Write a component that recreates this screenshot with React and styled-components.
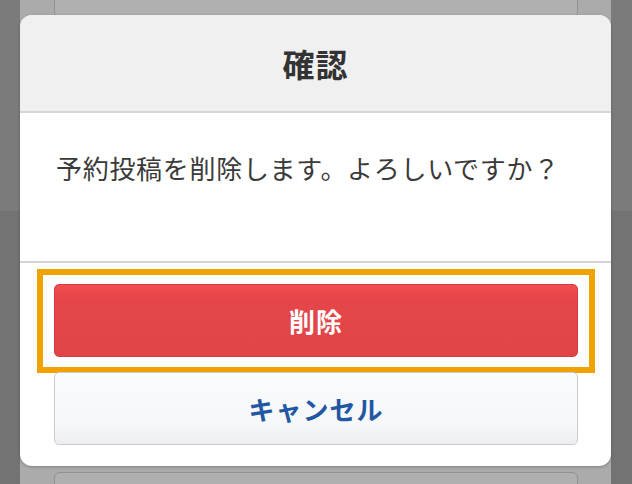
import React from "react";
import styled, { createGlobalStyle } from "styled-components";

const GlobalStyle = createGlobalStyle`
  html, body {
    margin: 0;
    padding: 0;
    background: #7a7a7a;
  }
  body {
    font-family: "Noto Sans CJK JP", "Noto Sans", sans-serif;
  }
`;

const Screen = styled.div`
  position: relative;
  width: 632px;
  height: 484px;
  overflow: hidden;
  display: flex;
`;

const Gutter = styled.div`
  width: ${(p) => p.$w}px;
  flex: none;
  background: linear-gradient(#7b7b7b 0 211px, #737373 211px 100%);
`;

const Page = styled.div`
  flex: 1;
  background: #ababab;
  padding: 0 33px 0 34px;
  display: flex;
  flex-direction: column;
  justify-content: space-between;
`;

const Card = styled.div`
  height: ${(p) => p.$h}px;
  background: #b0b0b0;
  border: 1px solid #929292;
  border-radius: ${(p) => (p.$top ? "0 0 6px 6px" : "6px 6px 0 0")};
  margin: ${(p) => (p.$top ? "-2px 0 0" : "0 0 -2px")};
`;

const Dialog = styled.div`
  position: absolute;
  top: 15px;
  left: 20px;
  width: 591px;
  height: 451px;
  background: #fff;
  border-radius: 12px;
  overflow: hidden;
  display: flex;
  flex-direction: column;
  box-shadow: 0 1px 3px rgba(0, 0, 0, 0.25);
`;

const Header = styled.div`
  height: 96px;
  flex: none;
  background: #f0f0f0;
  border-bottom: 2px solid #d5d5d5;
  display: flex;
  align-items: center;
  justify-content: center;
`;

const Title = styled.h2`
  margin: 0;
  font-size: 32px;
  font-weight: 700;
  color: #333;
  line-height: 1;
  letter-spacing: 1px;
`;

const Body = styled.div`
  height: 150px;
  flex: none;
  box-sizing: border-box;
  border-bottom: 2px solid #d5d5d5;
  padding: 37px 0 0 36px;
`;

const Message = styled.p`
  margin: 0;
  font-size: 26px;
  line-height: 36px;
  color: #3a3a3a;
  letter-spacing: 0.7px;
`;

const Footer = styled.div`
  padding: 6px 16px 0 17px;
  display: flex;
  flex-direction: column;
`;

const Highlight = styled.div`
  border: 6px solid #f2a200;
  padding: 9px 11px 10px;
`;

const Button = styled.button`
  display: flex;
  align-items: center;
  justify-content: center;
  width: 100%;
  height: 73px;
  box-sizing: border-box;
  border-radius: 5px;
  font-family: inherit;
  font-size: 26px;
  font-weight: 700;
  letter-spacing: 1px;
  cursor: pointer;
  border: 1px solid ${(p) => (p.$danger ? "#cf3d41" : "#cacccf")};
  color: ${(p) => (p.$danger ? "#fff" : "#2257a3")};
  background: ${(p) =>
    p.$danger
      ? "linear-gradient(#f24d4f, #e5464a 20%, #e14447)"
      : "linear-gradient(#fafbfc, #f6f7f9 75%, #eceef0)"};
`;

const CancelRow = styled.div`
  margin: -1px 17px 0;
`;

export default function App() {
  return (
    <>
      <GlobalStyle />
      <Screen>
        <Gutter $w={20} />
        <Page>
          <Card $top $h={18} />
          <Card $h={12} />
        </Page>
        <Gutter $w={21} />
        <Dialog role="dialog" aria-labelledby="confirm-title">
          <Header>
            <Title id="confirm-title">確認</Title>
          </Header>
          <Body>
            <Message>予約投稿を削除します。よろしいですか？</Message>
          </Body>
          <Footer>
            <Highlight>
              <Button $danger>削除</Button>
            </Highlight>
            <CancelRow>
              <Button>キャンセル</Button>
            </CancelRow>
          </Footer>
        </Dialog>
      </Screen>
    </>
  );
}
